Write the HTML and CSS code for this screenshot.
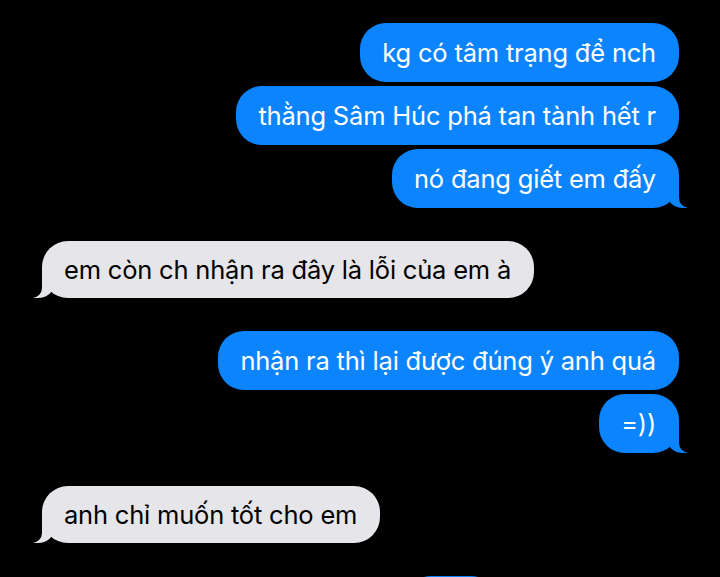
FILE: index.html
```html
<!DOCTYPE html>
<html lang="vi">

<head>
    <meta charset="UTF-8">
    <meta name="viewport" content="width=device-width, initial-scale=1.0">
    <title>Tin nhắn</title>
    <link rel="stylesheet" href="styles.css">
</head>

<body>
    <div class="thread">
        <div class="group sent">
            <div class="bubble">kg có tâm trạng để nch</div>
            <div class="bubble">thằng Sâm Húc phá tan tành hết r</div>
            <div class="bubble tail">nó đang giết em đấy</div>
        </div>

        <div class="group received">
            <div class="bubble tail">em còn ch nhận ra đây là lỗi của em à</div>
        </div>

        <div class="group sent">
            <div class="bubble">nhận ra thì lại được đúng ý anh quá</div>
            <div class="bubble tail">=))</div>
        </div>

        <div class="group received">
            <div class="bubble tail">anh chỉ muốn tốt cho em</div>
        </div>

        <div class="group sent">
            <div class="bubble cut">&nbsp;</div>
        </div>
    </div>
</body>

</html>
```

FILE: styles.css
```css
html {
    font-family: Inter, "Noto Sans", sans-serif;
}

body {
    margin: 0;
    background: #000;
    height: 577px;
    overflow: hidden;
}

.thread {
    display: flex;
    flex-direction: column;
    gap: 33px;
    padding: 23px 41px 0 42px;
}

.group {
    display: flex;
    flex-direction: column;
    gap: 4px;
}

.group.sent {
    align-items: flex-end;
}

.group.received {
    align-items: flex-start;
}

.bubble {
    position: relative;
    padding: 15px 23px 15px 22px;
    font-size: 25.5px;
    line-height: 29px;
    letter-spacing: -0.2px;
    border-radius: 26px;
    white-space: nowrap;
}

.sent .bubble {
    background: #0b84fe;
    color: #fff;
}

.received .bubble {
    padding-top: 14px;
    padding-bottom: 14px;
    background: #e5e5ea;
    color: #000;
}

/* tails */
.bubble.tail::before,
.bubble.tail::after {
    content: "";
    position: absolute;
    bottom: 0;
    height: 25px;
}

.sent .bubble.tail::before {
    right: -8px;
    width: 20px;
    background: #0b84fe;
    border-bottom-left-radius: 16px 14px;
}

.sent .bubble.tail::after {
    right: -26px;
    width: 26px;
    background: #000;
    border-bottom-left-radius: 10px;
}

.received .bubble.tail::before {
    left: -8px;
    width: 20px;
    background: #e5e5ea;
    border-bottom-right-radius: 16px 14px;
}

.received .bubble.tail::after {
    left: -26px;
    width: 26px;
    background: #000;
    border-bottom-right-radius: 10px;
}

.bubble.cut {
    width: 92px;
    padding-left: 0;
    padding-right: 0;
    margin-right: 182px;
}
```
